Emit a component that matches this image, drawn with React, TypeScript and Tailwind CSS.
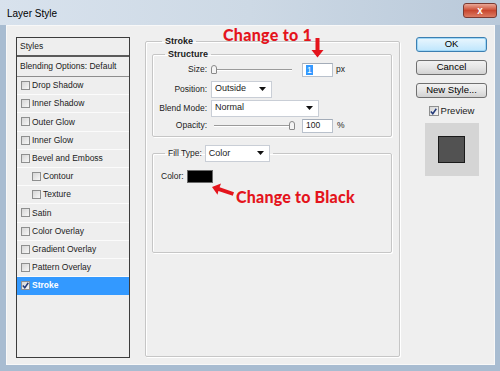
import React from 'react';

const items = [
  { name: 'Drop Shadow' },
  { name: 'Inner Shadow' },
  { name: 'Outer Glow' },
  { name: 'Inner Glow' },
  { name: 'Bevel and Emboss' },
  { name: 'Contour', indent: true },
  { name: 'Texture', indent: true },
  { name: 'Satin' },
  { name: 'Color Overlay' },
  { name: 'Gradient Overlay' },
  { name: 'Pattern Overlay' },
  { name: 'Stroke', active: true },
];

const Box = ({ checked = false, size = 9 }: { checked?: boolean; size?: number }) => (
  <span
    className={`${size === 9 ? 'w-[9px] h-[9px]' : 'w-[10px] h-[10px]'} shrink-0 border border-[#8e8f8f] bg-gradient-to-br from-[#d6d6d6] to-[#f7f7f7] flex items-center justify-center`}
  >
    {checked && (
      <svg width="7" height="7" viewBox="0 0 7 7">
        <path d="M0.8 3.6 L2.8 5.8 L6.3 0.8" stroke="#233a7a" strokeWidth="1.5" fill="none" />
      </svg>
    )}
  </span>
);

const Slider = ({ at }: { at: 'start' | 'end' }) => (
  <div className={`w-[84px] h-[10px] flex items-center ${at === 'end' ? 'justify-end' : 'justify-start'} relative`}>
    <div className="absolute left-[3px] right-[3px] top-[4px] h-[2px] border-t border-[#9b9b9b] border-b border-b-white" />
    <span className="relative w-[6px] h-[9px] rounded-t-[3px] rounded-b-[1px] border border-[#8a8a8a] bg-[#f4f4f4]" />
  </div>
);

const Field = ({ children }: { children: React.ReactNode }) => (
  <div className="w-[31px] h-[14px] border border-[#b9c1cc] border-t-[#a3acb8] bg-white flex items-center pl-[3px] text-[8.5px]">
    {children}
  </div>
);

const Select = ({ value, w }: { value: string; w: string }) => (
  <div className={`${w} h-[17px] border border-[#c9ced6] bg-white flex items-center justify-between pl-[3px] pr-[5px] text-[9px]`}>
    <span>{value}</span>
    <svg width="7" height="4" viewBox="0 0 7 4"><path d="M0 0 H7 L3.5 4 Z" fill="#111" /></svg>
  </div>
);

const Button = ({ label, focus = false }: { label: string; focus?: boolean }) => (
  <div
    className={`w-[71px] h-[15px] rounded-[3px] flex items-center justify-center text-[9.5px] text-black bg-gradient-to-b ${
      focus
        ? 'border border-[#3c7fb1] from-[#eaf6fd] to-[#bee6fd] shadow-[inset_0_0_0_1px_#9fd7f7]'
        : 'border border-[#707070] from-[#f2f2f2] via-[#e6e6e6] to-[#d2d2d2]'
    }`}
  >
    {label}
  </div>
);

export default function App() {
  return (
    <div className="w-[500px] h-[371px] flex flex-col bg-[#a8bcd1] font-['Liberation_Sans',Arial,sans-serif] text-[8.5px] text-[#1b1b1b] relative overflow-hidden">
      {/* title bar */}
      <div className="h-[25px] shrink-0 flex items-start justify-between pl-[7px] pr-[3px] bg-gradient-to-r from-[#d8e2ed] via-[#cdd9e5] to-[#b9c9da]">
        <span className="text-[10px] leading-[10px] mt-[9px] text-black">Layer Style</span>
        <div className="mt-[3px] w-[34px] h-[15px] rounded-[3px] border border-[#7a3a32] bg-gradient-to-b from-[#e9a797] via-[#c8472f] to-[#dc7a62] flex items-center justify-center text-white font-bold text-[10px] leading-none">
          x
        </div>
      </div>

      {/* client area */}
      <div className="flex-1 ml-[6px] mr-[5px] mb-[6px] bg-[#efefef] border border-[#f8f8f8] flex items-start pt-[11px] pl-[9px]">
        {/* styles list */}
        <div className="w-[114px] h-[321px] shrink-0 border border-[#3c3c3c] bg-[#eeeeee] flex flex-col">
          <div className="h-[19px] shrink-0 border-b-2 border-[#5a5a5a] flex items-center pl-[3px]">Styles</div>
          <div className="h-[20px] shrink-0 border-b border-[#8d8d8d] flex items-center pl-[3px]">Blending Options: Default</div>
          {items.map((it) => (
            <div
              key={it.name}
              className={`h-[18.2px] shrink-0 border-b flex items-center gap-[2px] ${it.indent ? 'pl-[15px]' : 'pl-[4px]'} ${
                it.active ? 'bg-[#3399ff] border-[#3399ff] text-white font-bold' : 'border-[#fbfbfb]'
              }`}
            >
              <Box checked={!!it.active} />
              <span>{it.name}</span>
            </div>
          ))}
        </div>

        {/* Stroke group */}
        <fieldset className="ml-[15px] -mt-[2px] w-[255px] h-[322px] shrink-0 border border-[#c6c6c6] rounded-[2px] shadow-[inset_1px_1px_0_#fff,1px_1px_0_#fff] px-[6px]">
          <legend className="ml-[10px] px-[3px] font-bold leading-[12px] text-[9px]">Stroke</legend>

          <fieldset className="mt-[1px] mr-[1px] border border-[#c6c6c6] rounded-[2px] shadow-[inset_1px_1px_0_#fff,1px_1px_0_#fff] pt-[2px] pb-[3px]">
            <legend className="ml-[12px] px-[3px] font-bold leading-[12px] text-[9px]">Structure</legend>
            <div className="flex flex-col">
              <div className="h-[15px] flex items-center">
                <span className="w-[54px] text-right">Size:</span>
                <div className="ml-[4px]"><Slider at="start" /></div>
                <div className="ml-[7px]">
                  <Field><span className="bg-[#3399ff] text-white px-[1px] leading-[10px]">1</span></Field>
                </div>
                <span className="ml-[3px]">px</span>
              </div>
              <div className="h-[18px] mt-[3px] flex items-center">
                <span className="w-[54px] text-right">Position:</span>
                <div className="ml-[4px]"><Select value="Outside" w="w-[61px]" /></div>
              </div>
              <div className="h-[18px] mt-[1px] flex items-center">
                <span className="w-[54px] text-right">Blend Mode:</span>
                <div className="ml-[4px]"><Select value="Normal" w="w-[108px]" /></div>
              </div>
              <div className="h-[15px] mt-[1px] flex items-center">
                <span className="w-[54px] text-right">Opacity:</span>
                <div className="ml-[4px]"><Slider at="end" /></div>
                <div className="ml-[7px]"><Field>100</Field></div>
                <span className="ml-[4px]">%</span>
              </div>
            </div>
          </fieldset>

          <fieldset className="mt-[7px] mr-[1px] h-[109px] border border-[#c6c6c6] rounded-[2px] shadow-[inset_1px_1px_0_#fff,1px_1px_0_#fff] pl-[8px]">
            <legend className="ml-[4px] px-[3px] flex items-center leading-[18px]">
              <span>Fill Type:</span>
              <div className="ml-[3px]"><Select value="Color" w="w-[65px]" /></div>
            </legend>
            <div className="mt-[8px] h-[13px] flex items-center">
              <span>Color:</span>
              <span className="ml-[3px] w-[26px] h-[13px] bg-black border border-[#6a6a6a]" />
            </div>
          </fieldset>
        </fieldset>

        {/* buttons */}
        <div className="ml-[16px] w-[71px] shrink-0 flex flex-col items-center gap-[8px]">
          <Button label="OK" focus />
          <Button label="Cancel" />
          <Button label="New Style..." />
          <div className="-mt-[2px] h-[14px] flex items-center gap-[2px] text-[9.5px]">
            <Box checked size={10} />
            <span>Preview</span>
          </div>
          <div className="-mt-[3px] w-[54px] h-[53px] bg-[#d5d5d5] flex items-center justify-center">
            <div className="w-[27px] h-[27px] bg-[#525252] border border-[#1a1a1a]" />
          </div>
        </div>
      </div>

      {/* red annotations */}
      <div className="absolute left-[223px] top-[25px] text-[16px] leading-[19px] font-black tracking-[0.3px] text-[#e4141c] font-['Lato','Liberation_Sans',sans-serif]">
        Change to 1
      </div>
      <svg className="absolute left-[311px] top-[38px]" width="13" height="20" viewBox="0 0 13 20">
        <path d="M4.5 0 H8.5 V12 H12.5 L6.5 19.5 L0.5 12 H4.5 Z" fill="#e4141c" />
      </svg>
      <div className="absolute left-[236px] top-[187px] text-[16px] leading-[19px] font-black tracking-[0.2px] text-[#e4141c] font-['Lato','Liberation_Sans',sans-serif]">
        Change to Black
      </div>
      <svg className="absolute left-[211px] top-[182px]" width="24" height="16" viewBox="0 0 24 16">
        <path d="M1 5 L10 1.5 L8.6 5.3 L23 10.2 L21.8 13.8 L7.4 8.9 L6.5 12.8 Z" fill="#e4141c" />
      </svg>
    </div>
  );
}
